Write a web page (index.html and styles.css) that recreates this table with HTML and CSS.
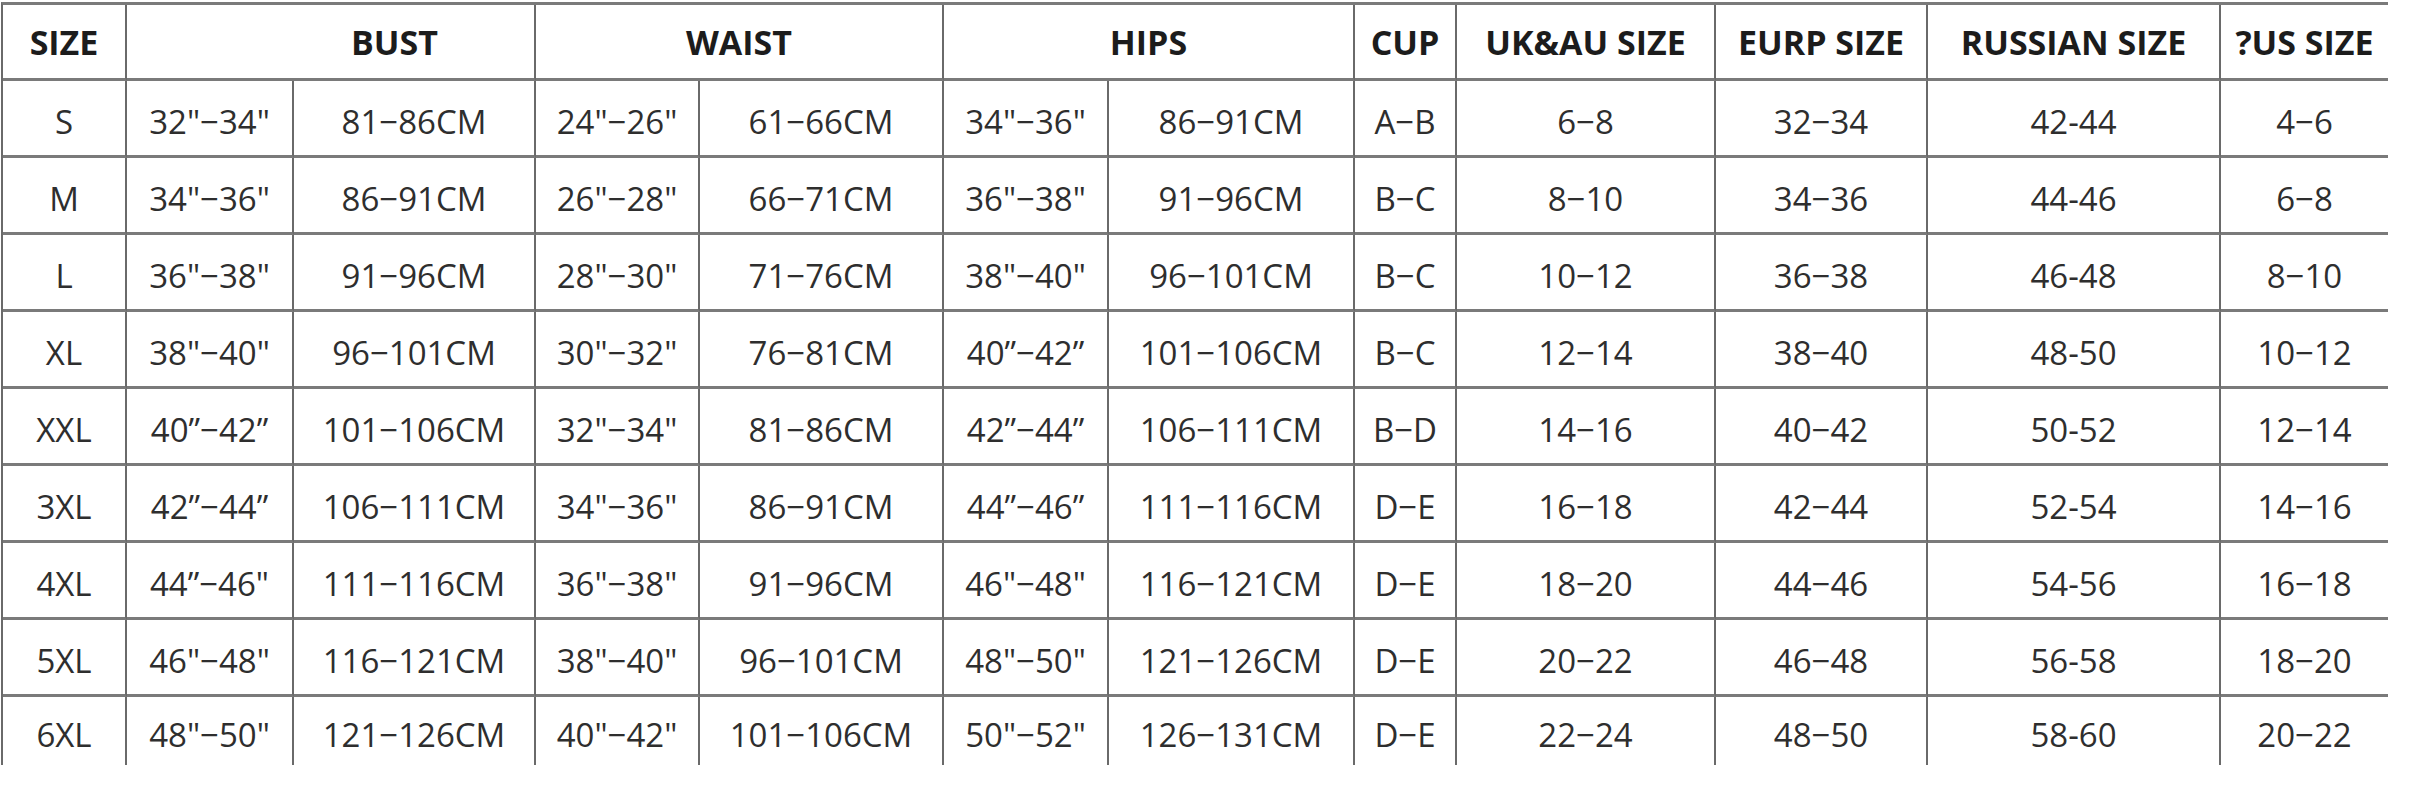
FILE: index.html
```html
<!DOCTYPE html>
<html lang="en">
<head>
<meta charset="utf-8">
<title>Size Chart</title>
<link rel="stylesheet" href="styles.css">
</head>
<body>
<div class="page">
<div class="chart" role="table">
  <div class="cell head">SIZE</div>
  <div class="cell head span2 bust">BUST</div>
  <div class="cell head span2">WAIST</div>
  <div class="cell head span2">HIPS</div>
  <div class="cell head">CUP</div>
  <div class="cell head">UK&amp;AU SIZE</div>
  <div class="cell head">EURP SIZE</div>
  <div class="cell head">RUSSIAN SIZE</div>
  <div class="cell head end">?US SIZE</div>

  <div class="cell">S</div><div class="cell">32"−34"</div><div class="cell">81−86CM</div><div class="cell">24"−26"</div><div class="cell">61−66CM</div><div class="cell">34"−36"</div><div class="cell">86−91CM</div><div class="cell">A−B</div><div class="cell">6−8</div><div class="cell">32−34</div><div class="cell">42-44</div><div class="cell end">4−6</div>

  <div class="cell">M</div><div class="cell">34"−36"</div><div class="cell">86−91CM</div><div class="cell">26"−28"</div><div class="cell">66−71CM</div><div class="cell">36"−38"</div><div class="cell">91−96CM</div><div class="cell">B−C</div><div class="cell">8−10</div><div class="cell">34−36</div><div class="cell">44-46</div><div class="cell end">6−8</div>

  <div class="cell">L</div><div class="cell">36"−38"</div><div class="cell">91−96CM</div><div class="cell">28"−30"</div><div class="cell">71−76CM</div><div class="cell">38"−40"</div><div class="cell">96−101CM</div><div class="cell">B−C</div><div class="cell">10−12</div><div class="cell">36−38</div><div class="cell">46-48</div><div class="cell end">8−10</div>

  <div class="cell">XL</div><div class="cell">38"−40"</div><div class="cell">96−101CM</div><div class="cell">30"−32"</div><div class="cell">76−81CM</div><div class="cell">40”−42”</div><div class="cell">101−106CM</div><div class="cell">B−C</div><div class="cell">12−14</div><div class="cell">38−40</div><div class="cell">48-50</div><div class="cell end">10−12</div>

  <div class="cell">XXL</div><div class="cell">40”−42”</div><div class="cell">101−106CM</div><div class="cell">32"−34"</div><div class="cell">81−86CM</div><div class="cell">42”−44”</div><div class="cell">106−111CM</div><div class="cell">B−D</div><div class="cell">14−16</div><div class="cell">40−42</div><div class="cell">50-52</div><div class="cell end">12−14</div>

  <div class="cell">3XL</div><div class="cell">42”−44”</div><div class="cell">106−111CM</div><div class="cell">34"−36"</div><div class="cell">86−91CM</div><div class="cell">44”−46”</div><div class="cell">111−116CM</div><div class="cell">D−E</div><div class="cell">16−18</div><div class="cell">42−44</div><div class="cell">52-54</div><div class="cell end">14−16</div>

  <div class="cell">4XL</div><div class="cell">44”−46"</div><div class="cell">111−116CM</div><div class="cell">36"−38"</div><div class="cell">91−96CM</div><div class="cell">46"−48"</div><div class="cell">116−121CM</div><div class="cell">D−E</div><div class="cell">18−20</div><div class="cell">44−46</div><div class="cell">54-56</div><div class="cell end">16−18</div>

  <div class="cell">5XL</div><div class="cell">46"−48"</div><div class="cell">116−121CM</div><div class="cell">38"−40"</div><div class="cell">96−101CM</div><div class="cell">48"−50"</div><div class="cell">121−126CM</div><div class="cell">D−E</div><div class="cell">20−22</div><div class="cell">46−48</div><div class="cell">56-58</div><div class="cell end">18−20</div>

  <div class="cell last">6XL</div><div class="cell last">48"−50"</div><div class="cell last">121−126CM</div><div class="cell last">40"−42"</div><div class="cell last">101−106CM</div><div class="cell last">50"−52"</div><div class="cell last">126−131CM</div><div class="cell last">D−E</div><div class="cell last">22−24</div><div class="cell last">48−50</div><div class="cell last">58-60</div><div class="cell last end">20−22</div>
</div>
</div>
</body>
</html>
```
FILE: styles.css
```css
html, body {
  margin: 0;
  padding: 0;
  background: #ffffff;
}

.page {
  width: 2412px;
  height: 800px;
  overflow: hidden;
  padding: 2px 0 0 1px;
  box-sizing: border-box;
}

.chart {
  display: grid;
  grid-template-columns: 124px 167px 242px 164px 244px 165px 246px 102px 259px 212px 293px 167px;
  grid-template-rows: 76px repeat(8, 77px) 68px;
  width: max-content;
  border-top: 3px solid #7a7a7a;
  border-left: 2px solid #6a6a6a;
  font-family: "Open Sans", "Liberation Sans", sans-serif;
  color: #2e2e2e;
}

.cell {
  display: flex;
  align-items: center;
  justify-content: center;
  white-space: nowrap;
  box-sizing: border-box;
  border-right: 2px solid #6a6a6a;
  border-bottom: 3px solid #7a7a7a;
  font-size: 33px;
  font-weight: 400;
  padding-top: 7px;
}

.cell.head {
  font-size: 34px;
  font-weight: 700;
  color: #1c1c1c;
  padding-top: 1px;
}

.cell.span2 {
  grid-column: span 2;
}

.cell.bust {
  padding-left: 128px;
}

.cell.end {
  border-right: none;
}

.cell.last {
  border-bottom: none;
}
```
